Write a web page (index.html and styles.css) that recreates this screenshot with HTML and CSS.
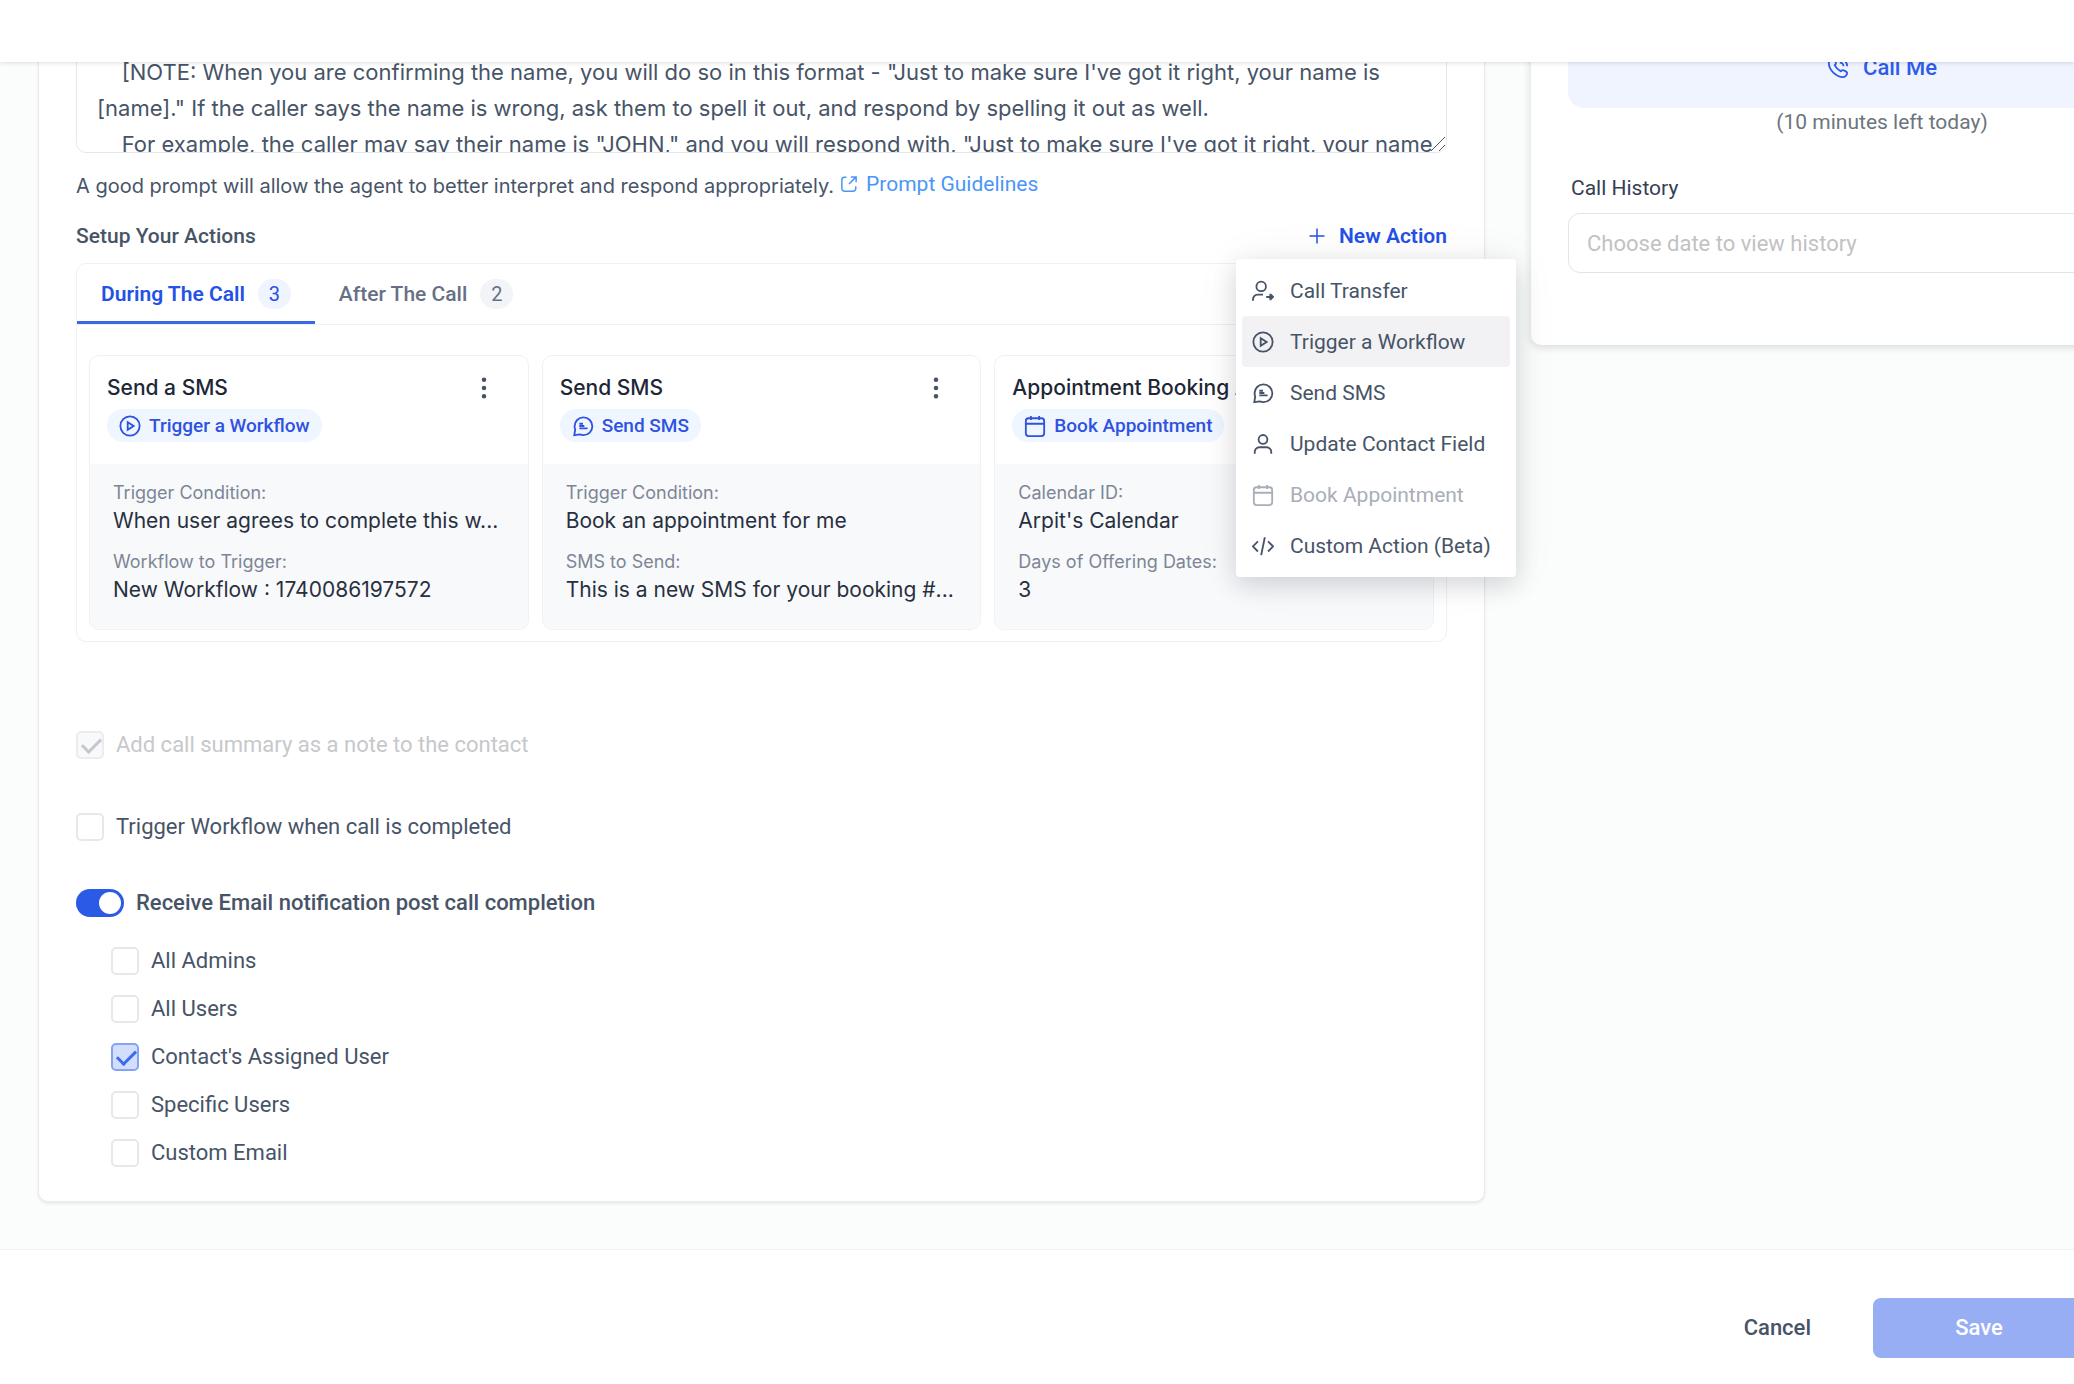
FILE: index.html
```html
<!DOCTYPE html>
<html lang="en">
<head>
  <meta charset="UTF-8" />
  <meta name="viewport" content="width=device-width, initial-scale=1.0" />
  <title>Voice AI Agent</title>
  <link rel="stylesheet" href="styles.css">
</head>
<body>

  <!-- Icon set -->
  <svg class="sprite" aria-hidden="true">
    <symbol id="i-play" viewBox="0 0 24 24"><circle cx="12" cy="12" r="10.5"/><path d="M9.5 7.800v8.400l6.500-4.200z"/></symbol>
    <symbol id="i-sms" viewBox="0 0 24 24"><path d="M12.500 22a9.700 9.700 0 1 0-9.700-9.700c0 1.300.2 2.500.7 3.700L2.500 22l6-.8c1.200.5 2.600.8 4 .8z"/><path d="M8 9.500h4M8 12h5.500M8 14.500h9"/></symbol>
    <symbol id="i-user" viewBox="0 0 24 24"><circle cx="12" cy="7" r="4.800"/><path d="M3 22.500v-2a5 5 0 0 1 5-5h8a5 5 0 0 1 5 5v2"/></symbol>
    <symbol id="i-transfer" viewBox="0 0 24 24"><circle cx="10" cy="7" r="5.200"/><path d="M1 22.500c0-4 2-6.500 5.500-6.500H12M15.500 18.500h7.500M20 15.500l3 3-3 3M20 15v7"/></symbol>
    <symbol id="i-calendar" viewBox="0 0 24 24"><rect x="2" y="3.500" width="20" height="19.500" rx="3"/><path d="M2 9.500h20M7.500 1v4.500M16.500 1v4.500"/></symbol>
    <symbol id="i-code" viewBox="0 0 24 24"><path d="M6.500 7l-5.500 5.500 5.500 5.500M17.500 7l5.500 5.500-5.500 5.500M14 2.500l-4 19.500"/></symbol>
    <symbol id="i-dots" viewBox="0 0 24 24"><circle cx="12" cy="3" r="1.500"/><circle cx="12" cy="12" r="1.500"/><circle cx="12" cy="21" r="1.500"/></symbol>
    <symbol id="i-plus" viewBox="0 0 24 24"><path d="M12 2v20M2 12h20"/></symbol>
    <symbol id="i-link" viewBox="0 0 24 24"><path d="M8.500 3H6a3.500 3.500 0 0 0-3.500 3.500V18A3.500 3.500 0 0 0 6 21.500h11.500A3.500 3.500 0 0 0 21 18v-3M14.500 2.500h7v7M21.500 2.500L12 12"/></symbol>
    <symbol id="i-phone" viewBox="0 0 24 24"><path d="M8.400 8.900a14 14 0 0 0 6.700 6.700c.3-.2 1.200-1.300 1.900-1.300 1.200 0 5 1.800 5 3.200 0 2-2.500 4.500-4.500 4.500C10 22 2 14 2 6.500 2 4.500 4.500 2 6.500 2c1.400 0 3.200 3.800 3.200 5 0 .7-1.100 1.600-1.300 1.900zM14 2a8 8 0 0 1 8 8M14 6a4 4 0 0 1 4 4"/></symbol>
    <symbol id="i-grip" viewBox="0 0 16 16"><path d="M1 15L15 1M9 15l6-6"/></symbol>
  </svg>

  <header class="topbar"></header>

  <main class="workspace">
    <section class="agent">
      <div class="prompt">
        <textarea class="prompt-text" aria-label="Prompt" spellcheck="false">    [NOTE: When you are confirming the name, you will do so in this format - "Just to make sure I've got it right, your name is [name]." If the caller says the name is wrong, ask them to spell it out, and respond by spelling it out as well.
    For example, the caller may say their name is "JOHN," and you will respond with, "Just to make sure I've got it right, your name</textarea>
        <svg class="grip"><use href="#i-grip"/></svg>
      </div>
      <div class="hint">
        <span>A good prompt will allow the agent to better interpret and respond appropriately.</span>
        <a class="guide" href="#"><svg class="icon"><use href="#i-link"/></svg>Prompt Guidelines</a>
      </div>

      <div class="actions-head">
        <h2>Setup Your Actions</h2>
        <div class="new-action">
          <button class="new-btn" type="button"><svg class="icon"><use href="#i-plus"/></svg>New Action</button>
          <div class="menu">
            <button type="button"><svg class="icon"><use href="#i-transfer"/></svg>Call Transfer</button>
            <button type="button" class="current"><svg class="icon"><use href="#i-play"/></svg>Trigger a Workflow</button>
            <button type="button"><svg class="icon"><use href="#i-sms"/></svg>Send SMS</button>
            <button type="button"><svg class="icon"><use href="#i-user"/></svg>Update Contact Field</button>
            <button type="button" disabled><svg class="icon"><use href="#i-calendar"/></svg>Book Appointment</button>
            <button type="button"><svg class="icon"><use href="#i-code"/></svg>Custom Action (Beta)</button>
          </div>
        </div>
      </div>

      <div class="panel">
        <div class="tabs">
          <button type="button" class="tab active">During The Call <span class="count">3</span></button>
          <button type="button" class="tab">After The Call <span class="count">2</span></button>
        </div>
        <div class="cards">
          <article class="card">
            <div class="card-top">
              <div class="card-title">
                <h3>Send a SMS</h3>
                <button type="button" class="more" aria-label="More"><svg class="icon"><use href="#i-dots"/></svg></button>
              </div>
              <span class="pill"><svg class="icon"><use href="#i-play"/></svg>Trigger a Workflow</span>
            </div>
            <dl class="card-body">
              <dt>Trigger Condition:</dt>
              <dd>When user agrees to complete this w...</dd>
              <dt>Workflow to Trigger:</dt>
              <dd>New Workflow : 1740086197572</dd>
            </dl>
          </article>
          <article class="card">
            <div class="card-top">
              <div class="card-title">
                <h3>Send SMS</h3>
                <button type="button" class="more" aria-label="More"><svg class="icon"><use href="#i-dots"/></svg></button>
              </div>
              <span class="pill"><svg class="icon"><use href="#i-sms"/></svg>Send SMS</span>
            </div>
            <dl class="card-body">
              <dt>Trigger Condition:</dt>
              <dd>Book an appointment for me</dd>
              <dt>SMS to Send:</dt>
              <dd>This is a new SMS for your booking #...</dd>
            </dl>
          </article>
          <article class="card">
            <div class="card-top">
              <div class="card-title">
                <h3>Appointment Booking Action</h3>
                <button type="button" class="more" aria-label="More"><svg class="icon"><use href="#i-dots"/></svg></button>
              </div>
              <span class="pill"><svg class="icon"><use href="#i-calendar"/></svg>Book Appointment</span>
            </div>
            <dl class="card-body">
              <dt>Calendar ID:</dt>
              <dd>Arpit's Calendar</dd>
              <dt>Days of Offering Dates:</dt>
              <dd>3</dd>
            </dl>
          </article>
        </div>
      </div>

      <div class="options">
        <label class="check muted"><input type="checkbox" checked disabled>Add call summary as a note to the contact</label>
        <label class="check"><input type="checkbox">Trigger Workflow when call is completed</label>
        <div class="notify">
          <label class="switch"><input type="checkbox" role="switch" checked>Receive Email notification post call completion</label>
          <div class="recipients">
            <label class="check"><input type="checkbox">All Admins</label>
            <label class="check"><input type="checkbox">All Users</label>
            <label class="check"><input type="checkbox" checked>Contact's Assigned User</label>
            <label class="check"><input type="checkbox">Specific Users</label>
            <label class="check"><input type="checkbox">Custom Email</label>
          </div>
        </div>
      </div>
    </section>

    <aside class="test-call">
      <button type="button" class="call-btn"><svg class="icon"><use href="#i-phone"/></svg>Call Me</button>
      <p class="left-today">(10 minutes left today)</p>
      <label class="history-label" for="history">Call History</label>
      <input class="history" id="history" type="text" placeholder="Choose date to view history">
    </aside>
  </main>

  <footer class="footer">
    <button type="button" class="cancel">Cancel</button>
    <button type="button" class="save">Save</button>
  </footer>

</body>
</html>
```
FILE: styles.css
```css
* {
  box-sizing: border-box;
}
body {
  margin: 0;
  min-height: 100vh;
  display: flex;
  flex-direction: column;
  overflow-x: hidden;
  background-color: #fff;
  color: #475467;
  font-family: Roboto, sans-serif;
  font-size: 22px;
  line-height: 28px;
}
button, input, textarea {
  font: inherit;
  color: inherit;
}
button {
  border: none;
  background: none;
  padding: 0;
  cursor: pointer;
}
h2, h3, p, dl, dd {
  margin: 0;
}
.sprite {
  position: absolute;
  width: 0;
  height: 0;
}
.icon {
  width: 22px;
  height: 22px;
  flex: none;
  fill: none;
  stroke: currentColor;
  stroke-width: 2;
}

.topbar {
  position: relative;
  z-index: 2;
  height: 62px;
  background-color: #fff;
  box-shadow: 0 1px 4px rgba(16, 24, 40, 0.14);
}
.workspace {
  display: flex;
  align-items: flex-start;
  gap: 46px;
  padding: 0 0 47px 38px;
  background-color: #fbfdfc;
  overflow: hidden;
}

/* Agent settings */
.agent {
  flex: 1;
  min-width: 0;
  margin-top: -40px;
  padding: 12px 37px 34px;
  background-color: #fff;
  border: 1px solid #e9ebee;
  border-radius: 10px;
  box-shadow: 0 2px 3px rgba(16, 24, 40, 0.08);
}
.prompt {
  position: relative;
  height: 118px;
}
.prompt-text {
  display: block;
  width: 100%;
  height: 100%;
  padding: 18px 8px 0 20px;
  border: 1px solid #e4e7ec;
  border-radius: 10px;
  resize: none;
  overflow: hidden;
  font-family: Inter, sans-serif;
  line-height: 36px;
}
.grip {
  position: absolute;
  right: 1px;
  bottom: 1px;
  width: 16px;
  height: 16px;
  fill: none;
  stroke: #555;
}
.hint {
  display: flex;
  align-items: center;
  gap: 6px;
  margin-top: 17px;
  font-family: Inter, sans-serif;
  font-size: 20px;
  line-height: 32px;
}
.guide {
  display: flex;
  align-items: center;
  gap: 8px;
  padding-bottom: 4px;
  color: #4a96f8;
  font-family: Roboto, sans-serif;
  font-size: 21px;
  line-height: 28px;
  text-decoration: none;
}
.guide .icon {
  width: 18px;
  height: 18px;
}
.actions-head {
  display: flex;
  justify-content: space-between;
  margin-top: 20px;
}
.actions-head h2 {
  font-size: 21px;
  font-weight: 500;
}
.new-action {
  position: relative;
}
.new-btn {
  display: flex;
  align-items: center;
  gap: 13px;
  color: #2451e6;
  font-size: 21px;
  font-weight: 600;
}
.new-btn .icon {
  width: 18px;
  height: 18px;
}
.menu {
  position: absolute;
  z-index: 1;
  top: 37px;
  right: -69px;
  width: 280px;
  padding: 6px;
  background-color: #fff;
  border-radius: 4px;
  box-shadow: 0 8px 24px rgba(16, 24, 40, 0.14), 0 2px 48px rgba(16, 24, 40, 0.06);
}
.menu button {
  display: flex;
  align-items: center;
  gap: 16px;
  width: 100%;
  height: 51px;
  padding: 0 10px;
  border-radius: 4px;
  font-size: 21px;
  white-space: nowrap;
}
.menu .current {
  background-color: #f2f2f5;
}
.menu button:disabled {
  color: #a9aeb8;
}

/* Tabs and action cards */
.panel {
  margin-top: 13px;
  border: 1px solid #f0f1f3;
  border-radius: 10px;
}
.tabs {
  display: flex;
  border-bottom: 1px solid #f0f1f3;
}
.tab {
  display: flex;
  align-items: center;
  gap: 13px;
  height: 60px;
  padding: 0 24px;
  color: #667085;
  font-size: 21px;
  font-weight: 500;
}
.tab.active {
  color: #2451e6;
  font-weight: 600;
  box-shadow: inset 0 -3px #3a66e8;
}
.count {
  width: 33px;
  border-radius: 16px;
  background-color: #f2f4f7;
  font-size: 20px;
  font-weight: 400;
  line-height: 30px;
  text-align: center;
}
.active .count {
  background-color: #eff4ff;
}
.cards {
  display: flex;
  gap: 13px;
  padding: 30px 12px 11px;
}
.card {
  flex: 1;
  min-width: 0;
  border: 1px solid #f0f1f4;
  border-radius: 10px;
  overflow: hidden;
}
.card-top {
  height: 108px;
  padding: 18px 17px 0;
}
.card-title {
  display: flex;
  justify-content: space-between;
  align-items: center;
}
.card-title h3 {
  color: #1d2736;
  font-family: Inter, sans-serif;
  font-size: 21px;
  font-weight: 500;
  white-space: nowrap;
}
.more {
  display: flex;
  margin-right: 16px;
}
.more .icon {
  fill: currentColor;
}
.pill {
  display: inline-flex;
  align-items: center;
  gap: 8px;
  height: 33px;
  margin-top: 7px;
  padding: 0 12px;
  border-radius: 16px;
  background-color: #eff6ff;
  color: #2f52e0;
  font-size: 19px;
  font-weight: 500;
}
.card-body {
  height: 165px;
  padding: 15px 23px 0;
  background-color: #f8f9fb;
  font-family: Inter, sans-serif;
}
.card-body dt {
  color: #7d8696;
  font-size: 18px;
  line-height: 27px;
}
.card-body dd {
  margin-bottom: 13px;
  color: #28303f;
  font-size: 21px;
  line-height: 29px;
  white-space: nowrap;
  overflow: hidden;
  text-overflow: ellipsis;
}

/* Post call options */
.options {
  display: flex;
  flex-direction: column;
  gap: 54px;
  margin-top: 89px;
}
.check {
  display: flex;
  align-items: center;
  gap: 12px;
}
.check input {
  appearance: none;
  width: 28px;
  height: 28px;
  margin: 0;
  border: 2px solid #e6e8ee;
  border-radius: 5px;
  background-color: #fff;
}
.check input:checked::before {
  content: "";
  display: block;
  width: 16px;
  height: 8px;
  margin: 6px 4px;
  border: solid #3c6bf0;
  border-width: 0 0 3px 3px;
  transform: translateY(-1px) rotate(-45deg);
}
.check input:checked {
  border-color: #84a3f5;
  background-color: #d3defb;
}
.check.muted {
  color: #c6c8cb;
}
.muted input:disabled {
  border-color: #ebecf0;
  background-color: #f8f9fb;
}
.muted input:disabled::before {
  border-color: #c6c8cb;
}
.notify {
  display: flex;
  flex-direction: column;
  gap: 30px;
  margin-top: -6px;
}
.switch {
  display: flex;
  align-items: center;
  gap: 12px;
  font-weight: 500;
}
.switch input {
  appearance: none;
  width: 48px;
  height: 28px;
  margin: 0;
  padding: 3px;
  border-radius: 14px;
  background-color: #2b5be6;
}
.switch input::before {
  content: "";
  display: block;
  width: 22px;
  height: 22px;
  margin-left: auto;
  border-radius: 50%;
  background-color: #fff;
}
.recipients {
  display: flex;
  flex-direction: column;
  gap: 20px;
  padding-left: 35px;
}

/* Test call column, runs past the right edge */
.test-call {
  flex: none;
  display: flex;
  flex-direction: column;
  width: 702px;
  margin-top: -60px;
  margin-right: -159px;
  padding: 26px 37px 72px;
  background-color: #fff;
  border-radius: 10px;
  box-shadow: 0 2px 8px rgba(16, 24, 40, 0.16);
}
.call-btn {
  display: flex;
  align-items: center;
  justify-content: center;
  gap: 14px;
  height: 80px;
  border-radius: 16px;
  background-color: #eff4ff;
  color: #2f5bea;
  font-weight: 500;
}
.left-today {
  color: #6c757d;
  font-size: 21px;
  text-align: center;
}
.history-label {
  margin: 38px 3px 11px;
  color: #344054;
  font-size: 21px;
}
.history {
  height: 60px;
  padding: 0 18px;
  border: 1px solid #e2e4e8;
  border-radius: 12px;
  background-color: #fff;
}
.history::placeholder {
  color: #c2c2c2;
}

.footer {
  flex: 1;
  display: flex;
  justify-content: flex-end;
  align-items: flex-start;
  gap: 62px;
  padding-top: 48px;
  border-top: 1px solid #f0f1f2;
  background-color: #fff;
}
.footer button {
  height: 60px;
  font-size: 22px;
  font-weight: 500;
}
.footer .save {
  width: 212px;
  margin-right: -11px;
  border-radius: 8px;
  background-color: #98aef4;
  color: #fff;
}
```
